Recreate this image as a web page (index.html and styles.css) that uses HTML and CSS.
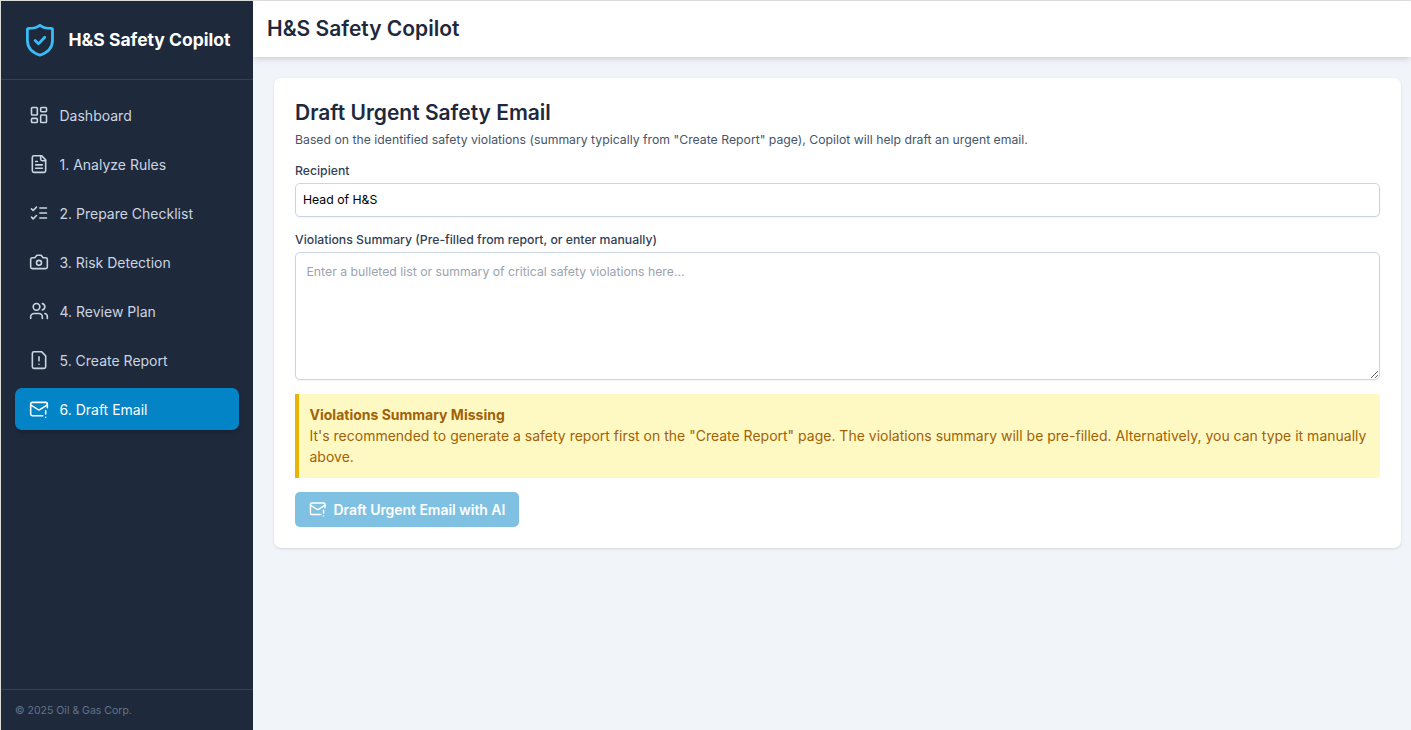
FILE: index.html
```html
<!DOCTYPE html>
<html lang="en">
<head>
<meta charset="utf-8">
<title>H&amp;S Safety Copilot</title>
<link rel="stylesheet" href="styles.css">
</head>
<body>
<div class="app">
  <aside class="sidebar">
    <div class="brand">
      <svg class="brand-icon" viewBox="0 0 24 24"><path d="M12.300 1.500C10.700 2.900 7.700 3.700 4.500 3.700Q3.700 3.700 3.700 4.500V12c0 4.800 3.300 8.300 8.600 10.100 5.300-1.800 8.600-5.300 8.600-10.100V4.500Q20.900 3.700 20.100 3.700C16.900 3.700 13.900 2.900 12.300 1.500z"/><path d="M9 12l2.300 2.300 4.300-4.500"/></svg>
      <span class="brand-name">H&amp;S Safety Copilot</span>
    </div>
    <nav class="nav">
      <a class="nav-item"><svg class="icon" viewBox="0 0 24 24"><rect x="3" y="3" width="7" height="9" rx="1"/><rect x="14" y="3" width="7" height="5" rx="1"/><rect x="14" y="12" width="7" height="9" rx="1"/><rect x="3" y="16" width="7" height="5" rx="1"/></svg><span>Dashboard</span></a>
      <a class="nav-item"><svg class="icon" viewBox="0 0 24 24"><path d="M15 2H6a2 2 0 0 0-2 2v16a2 2 0 0 0 2 2h12a2 2 0 0 0 2-2V7z"/><path d="M14 2v4a2 2 0 0 0 2 2h4M10 9H8M16 13H8M16 17H8"/></svg><span>1. Analyze Rules</span></a>
      <a class="nav-item"><svg class="icon" viewBox="0 0 24 24"><path d="m3 17 2 2 4-4M3 7l2 2 4-4M13 6h8M13 12h8M13 18h8"/></svg><span>2. Prepare Checklist</span></a>
      <a class="nav-item"><svg class="icon" viewBox="0 0 24 24"><path d="M14.500 4h-5L7 7H4a2 2 0 0 0-2 2v9a2 2 0 0 0 2 2h16a2 2 0 0 0 2-2V9a2 2 0 0 0-2-2h-3z"/><circle cx="12" cy="13" r="3"/></svg><span>3. Risk Detection</span></a>
      <a class="nav-item"><svg class="icon" viewBox="0 0 24 24"><path d="M16 21v-2a4 4 0 0 0-4-4H6a4 4 0 0 0-4 4v2"/><circle cx="9" cy="7" r="4"/><path d="M22 21v-2a4 4 0 0 0-3-3.870M16 3.130a4 4 0 0 1 0 7.750"/></svg><span>4. Review Plan</span></a>
      <a class="nav-item"><svg class="icon" viewBox="0 0 24 24"><path d="M15 2H6a2 2 0 0 0-2 2v16a2 2 0 0 0 2 2h12a2 2 0 0 0 2-2V7zM12 8v5M12 17h.010"/></svg><span>5. Create Report</span></a>
      <a class="nav-item active"><svg class="icon" viewBox="0 0 24 24"><path d="M22 10.500V6a2 2 0 0 0-2-2H4a2 2 0 0 0-2 2v12c0 1.100.900 2 2 2h12.500"/><path d="m22 7-8.970 5.700a1.940 1.940 0 0 1-2.060 0L2 7M20 14v4M20 22v.010"/></svg><span>6. Draft Email</span></a>
    </nav>
    <div class="copyright">© 2025 Oil &amp; Gas Corp.</div>
  </aside>
  <div class="main">
    <header class="topbar"><h1 class="heading">H&amp;S Safety Copilot</h1></header>
    <main class="content">
      <section class="card">
        <h2 class="heading">Draft Urgent Safety Email</h2>
        <p class="intro">Based on the identified safety violations (summary typically from "Create Report" page), Copilot will help draft an urgent email.</p>
        <label class="label" for="recipient">Recipient</label>
        <input class="field recipient" id="recipient" type="text" value="Head of H&amp;S">
        <label class="label" for="summary">Violations Summary (Pre-filled from report, or enter manually)</label>
        <textarea class="field summary" id="summary" placeholder="Enter a bulleted list or summary of critical safety violations here..."></textarea>
        <div class="notice">
          <p class="notice-title">Violations Summary Missing</p>
          <p>It's recommended to generate a safety report first on the "Create Report" page. The violations summary will be pre-filled. Alternatively, you can type it manually above.</p>
        </div>
        <button class="button" disabled><svg class="icon button-icon" viewBox="0 0 24 24"><path d="M22 10.500V6a2 2 0 0 0-2-2H4a2 2 0 0 0-2 2v12c0 1.100.900 2 2 2h12.500"/><path d="m22 7-8.970 5.700a1.940 1.940 0 0 1-2.060 0L2 7M20 14v4M20 22v.010"/></svg><span>Draft Urgent Email with AI</span></button>
      </section>
    </main>
  </div>
</div>
</body>
</html>
```
FILE: styles.css
```css
* { box-sizing: border-box; margin: 0; padding: 0; }
html { font-size: 14px; }
body { font-family: Inter, "Liberation Sans", sans-serif; line-height: 1.5; background: #f1f5f9; overflow: hidden; }
.app { display: flex; height: 730px; border-top: 1px solid #dcdcdc; border-left: 1px solid #dcdcdc; }
.sidebar { display: flex; flex-direction: column; width: 252px; flex: none; background: #1e293b; color: #cbd5e1; }
.brand { display: flex; align-items: center; gap: 11.5px; height: 79px; padding: 22px 21px 21px; border-bottom: 1px solid #334155; }
.brand-icon { width: 35px; height: 35px; flex: none; fill: none; stroke: #38bdf8; stroke-width: 1.9; stroke-linecap: round; stroke-linejoin: round; }
.brand-name { color: #fff; font-size: 17.5px; line-height: 24.5px; font-weight: 700; white-space: nowrap; }
.nav { display: flex; flex-direction: column; gap: 7px; flex: 1; padding: 14px; }
.nav-item { display: flex; align-items: center; gap: 10.5px; height: 42px; padding: 0 14px; border-radius: 7px; font-size: 14px; }
.nav-item.active { background: #0284c7; color: #fff; box-shadow: 0 4px 6px -1px rgb(0 0 0 / .1), 0 2px 4px -2px rgb(0 0 0 / .1); }
.icon { width: 20px; height: 20px; flex: none; fill: none; stroke: currentColor; stroke-width: 1.9; stroke-linecap: round; stroke-linejoin: round; }
.copyright { height: 41px; padding: 12px 14px; border-top: 1px solid #334155; color: #64748b; font-size: 10.5px; line-height: 17px; }
.main { display: flex; flex-direction: column; flex: 1; min-width: 0; }
.topbar { padding: 14px; height: 56px; background: #fff; box-shadow: 0 4px 6px -1px rgb(0 0 0 / .1), 0 2px 4px -2px rgb(0 0 0 / .1); }
.heading { color: #1e293b; font-size: 21px; line-height: 28px; font-weight: 600; }
.content { padding: 21px 10px 21px 21px; }
.card { height: 470px; padding: 21px; background: #fff; border-radius: 7px; box-shadow: 0 1px 3px rgb(0 0 0 / .1), 0 1px 2px -1px rgb(0 0 0 / .1); }
.nav .icon { margin-bottom: 1px; }
.intro { margin: 4px 0 13px; color: #475569; font-size: 12.25px; line-height: 17.5px; }
.label { display: block; margin-bottom: 3.5px; color: #334155; font-size: 12.25px; line-height: 17.5px; font-weight: 500; }
.field { display: block; width: 100%; border: 1px solid #cbd5e1; border-radius: 5px; background: #fff; font: 12.25px/17.5px Inter, sans-serif; color: #000; box-shadow: 0 1px 2px rgb(0 0 0 / .05); }
.recipient { height: 34px; padding: 7px; margin-bottom: 14px; }
.summary { height: 128px; padding: 10.5px; margin-bottom: 14px; resize: both; }
.summary::placeholder { color: #9ca3af; }
.notice { padding: 10.5px; border-left: 4px solid #eab308; background: #fef9c3; color: #a16207; font-size: 14px; line-height: 21px; }
.notice-title { font-weight: 700; }
.button { display: flex; align-items: center; gap: 7px; height: 35px; margin-top: 14px; padding: 0 14px; border: 0; border-radius: 5px; background: #0284c7; color: #fff; font: 600 14px/21px Inter, sans-serif; letter-spacing: -.05px; opacity: .5; }
.button-icon { width: 17.5px; height: 17.5px; stroke-width: 2; }
```
